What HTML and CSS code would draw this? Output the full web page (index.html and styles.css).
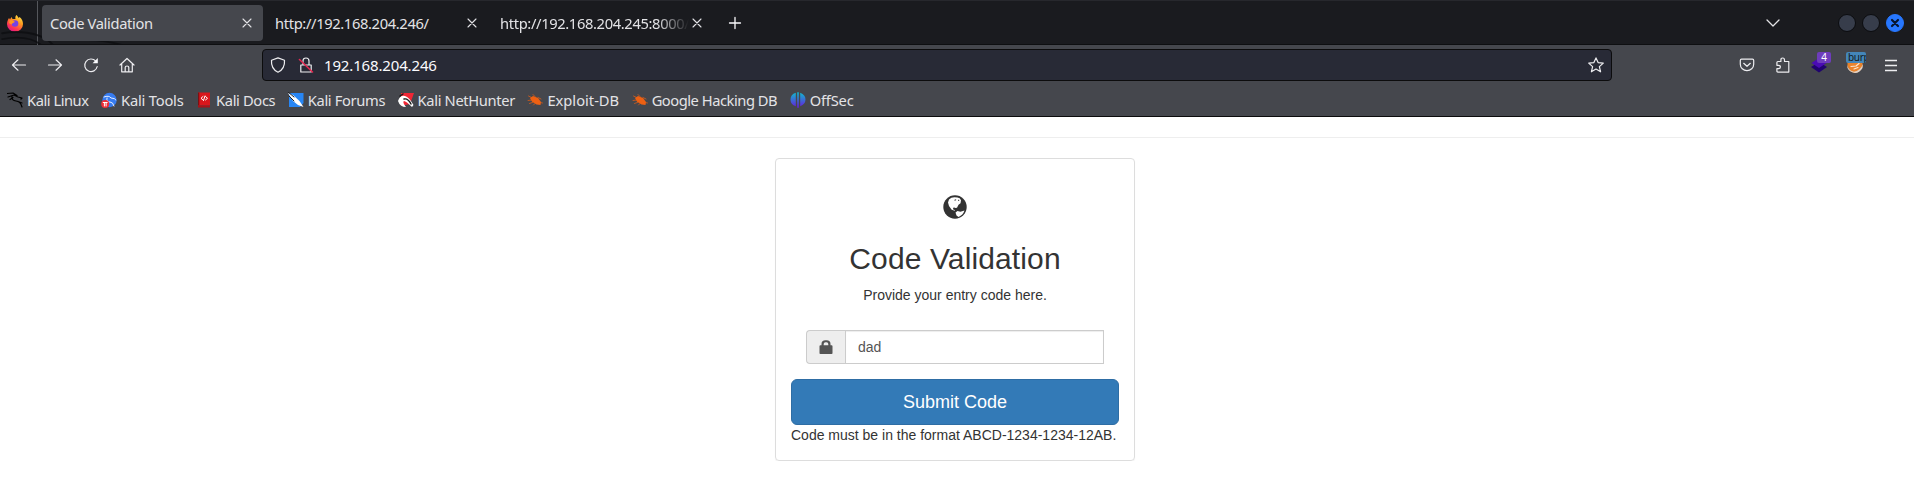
FILE: index.html
```html
<!DOCTYPE html>
<html lang="en">
<head>
<meta charset="utf-8">
<title>Code Validation</title>
<link rel="stylesheet" href="styles.css">
</head>
<body>
<header class="browser">
  <div class="tabbar">
    <svg class="wall" viewBox="0 0 200 45"><path d="M0 33C16 30 36 32 48 41l4 4M0 39c16-3 30-2 40 6M88 40c14 0 24 2 34 5" fill="none" stroke="#0d0e11" stroke-width="2"/></svg>
    <div class="fxcell">
      <svg width="18" height="18" viewBox="0 0 18 18"><defs><linearGradient id="fx" x1=".9" y1="0" x2=".3" y2="1"><stop offset="0" stop-color="#fff44f"/><stop offset=".4" stop-color="#ff9a1f"/><stop offset=".75" stop-color="#ff3b4e"/><stop offset="1" stop-color="#e31587"/></linearGradient></defs><path d="M10.500 1c1 .8 1.500 2 2.200 3l.9-.9C16 5 17 7.500 17 10a8 7.800 0 0 1-16 0C1 7.500 2 5.500 3 4l1 1.500L5.500 3l1 2L9.500 5C9 3.500 9.500 2 10.500 1z" fill="url(#fx)"/><circle cx="9" cy="9.500" r="3.300" fill="#7542e5"/><path d="M4 6c2 0 3.500.5 5 2-1.500.5-2.500 1-3.500 2.500L3 9z" fill="#ff9520"/></svg>
    </div>
    <div class="tab active"><span class="label">Code Validation</span><svg class="x" viewBox="0 0 10 10"><path d="M1 1l8 8M9 1L1 9"/></svg></div>
    <div class="tab"><span class="label">http://192.168.204.246/</span><svg class="x" viewBox="0 0 10 10"><path d="M1 1l8 8M9 1L1 9"/></svg></div>
    <div class="tab"><span class="label fade">http://192.168.204.245:8000/</span><svg class="x" viewBox="0 0 10 10"><path d="M1 1l8 8M9 1L1 9"/></svg></div>
    <svg class="plus" viewBox="0 0 14 14"><path d="M7 1.500v11M1.500 7h11"/></svg>
    <svg class="chev" viewBox="0 0 14 8"><path d="M1 1l6 6 6-6"/></svg>
    <div class="win"><i></i><i></i><i class="close"><svg viewBox="0 0 10 10"><path d="M2 2l6 6M8 2L2 8"/></svg></i></div>
  </div>
  <div class="navbar">
    <div class="navicons">
      <svg viewBox="0 0 16 16"><path d="M14.500 8H1.500M7 2.800L1.500 8 7 13.200"/></svg>
      <svg viewBox="0 0 16 16"><path d="M1.500 8h13M9 2.800L14.500 8 9 13.200"/></svg>
      <svg viewBox="0 0 16 16"><path d="M12.800 4.200A6.300 6.300 0 1 0 14.200 9.500"/><path d="M14.800 1v5.200H9.600z" fill="#fbfbfe" stroke="none"/></svg>
      <svg viewBox="0 0 16 16"><path d="M1 8l7-6.500L15 8M2.700 7v7.800h10.600V7M6.200 14.500v-4q0-1.500 1.800-1.500t1.800 1.500v4"/></svg>
    </div>
    <div class="urlbar">
      <svg class="shield" viewBox="0 0 16 16"><path d="M8 .9l6.500 2.300c.4 5-1 9.300-6.500 12-5.500-2.700-6.900-7-6.500-12z"/></svg>
      <svg class="lock" viewBox="0 0 16 16"><path d="M2.800 8h10.400v7H2.800zM5 8V4q0-3 3-3t3 3v4"/><path d="M1.500 2.500l13 12.500" stroke="#e22850" stroke-width="1.600"/></svg>
      <span class="addr">192.168.204.246</span>
      <svg class="star" viewBox="0 0 16 16"><path d="M8 .9l2.100 4.700 5.200.5-3.900 3.500 1.200 5.200L8 12.100l-4.600 2.700 1.200-5.200L.7 6.100l5.200-.5z"/></svg>
    </div>
    <div class="tools">
      <svg viewBox="0 0 16 16"><path d="M2.500 2.200h11q1.200 0 1.200 1.200v3.800a6.700 6.500 0 0 1-13.400 0V3.400q0-1.200 1.200-1.200z"/><path d="M4.700 6.300L8 9.300l3.300-3"/></svg>
      <svg viewBox="0 0 16 16"><path d="M1.900 5.500q0-1 1-1h3V3q0-2 1.800-2t1.800 2v1.500h4.300v10.600H2.900q-1 0-1-1v-2.400h1.500q2 0 2-1.700t-2-1.700H1.900z"/></svg>
      <div class="ext"><svg viewBox="0 0 16 16"><path d="M8 5l8 5-8 5.500L0 10z" fill="#20036f" stroke="none"/><path d="M8 1l7.500 5L8 11 .5 6z" fill="#4a0bb5" stroke="none"/></svg><b class="badge">4</b></div>
      <div class="ext fox"><svg viewBox="0 0 16 16"><path d="M.5 2h15v7q-1.500 6-7.500 7-6-1-7.500-7z" fill="#e9832b" stroke="none"/><path d="M0 8q2 6 7 6.800Q13 14 16 7l-.5 4q-3 5-7.500 5-6-1-7.500-5z" fill="#dfd2c8" stroke="none"/><path d="M4 9.500l5-.5 3-2.500M7 12l4-1.500" stroke="#fbe5cf"/></svg><b class="badge burp">burp</b></div>
      <svg class="menu" viewBox="0 0 16 16"><path d="M2 3.500h12M2 8.500h12M2 13.500h12"/></svg>
    </div>
  </div>
  <nav class="bookmarks">
    <a class="t5"><svg viewBox="0 0 16 16"><path d="M0 1.500l6-.5 4 2.500M1 5l6-2 4 2 4 1-1 1M5 4.500q-.5 4 4 4.500t6 6M3 7.500l3-2M11 9.500l4 1.500" fill="none" stroke="#000" stroke-width="1.200"/></svg>Kali Linux</a>
    <a class="t2"><svg viewBox="0 0 16 16"><circle cx="8.500" cy="8" r="7.200" fill="#367bf0"/><path d="M3 5q5-2 7 1 4 0 5 2M6 6q-1 4 3 4 3 0 4 4" fill="none" stroke="#e8f0ff" stroke-width="1"/><circle cx="4.200" cy="12" r="4" fill="#ed2e36"/><path d="M2.200 10.500h4M3.400 10.500v3.500M5.100 10.500v3.500" stroke="#fff"/></svg>Kali Tools</a>
    <a class="t4"><svg viewBox="0 0 16 16"><path d="M2 .5h12v13H2z" fill="#d9161c"/><path d="M2 .5h1.300v13H2z" fill="#7d1012"/><path d="M2 13.500h12v2H2z" fill="#a91218"/><path d="M7 4.500L5 6.300 7 8M9.500 4.500l2 1.800-2 1.700M9 4L7.500 8.500" fill="none" stroke="#fff"/></svg>Kali Docs</a>
    <a class="t4"><svg viewBox="0 0 16 16"><path d="M1 1h14.500v10L12 15H1z" fill="#2786f5"/><path d="M0 1l5 2 6.500 6 4 6-5.500-2L5 9z" fill="#fff"/><path d="M0 0l6 5M1 4l5 5" stroke="#222"/></svg>Kali Forums</a>
    <a class="t4"><svg viewBox="0 0 16 16"><path d="M3 1h13l-4 11-9 2z" fill="#f02635"/><path d="M0 9q2-6 7-5 4 1 8.500 9l-1.500 2q-6-6-8-6-2 1 2 6-6 0-8-6z" fill="#fff"/><path d="M2 4l3-2M6 7q4-1 7 5" fill="none" stroke="#161616" stroke-width="1.400"/></svg>Kali NetHunter</a>
    <a><svg viewBox="0 0 16 16"><path d="M3 6l3-2 5 2 3 4-.5 3-4-.5L5 9.500z" fill="#ed6013"/><path d="M1.500 4l4 2M6 2.500l2 2M1 8.500l4-.5M2.500 11.500l4-1.500M11 5.500l3 1.500M13 10.500l2.500.5M8.500 11L6.500 13" stroke="#ed6013" stroke-width=".7"/></svg>Exploit-DB</a>
    <a class="t5"><svg viewBox="0 0 16 16"><path d="M3 6l3-2 5 2 3 4-.5 3-4-.5L5 9.500z" fill="#ed6013"/><path d="M1.500 4l4 2M6 2.500l2 2M1 8.500l4-.5M2.500 11.500l4-1.500M11 5.500l3 1.500M13 10.500l2.500.5M8.500 11L6.500 13" stroke="#ed6013" stroke-width=".7"/></svg>Google Hacking DB</a>
    <a class="t2"><svg viewBox="0 0 16 16"><defs><linearGradient id="os" gradientUnits="userSpaceOnUse" x1="0" y1="1" x2="0" y2="15"><stop offset="0" stop-color="#12b5cf"/><stop offset="1" stop-color="#6420dd"/></linearGradient></defs><path d="M5.800.8v13.400Q.5 12.500.5 7.500T5.800.8zM7.200.3h1.600v15.400H7.200zM10.200.8q5.300 2.200 5.300 6.700t-5.300 6.700z" fill="url(#os)"/></svg>OffSec</a>
  </nav>
</header>
<main class="page">
  <hr class="rule">
  <section class="panel">
    <svg class="globe" viewBox="0 0 24 24"><circle cx="12" cy="12" r="11.700" fill="#333"/><path d="M6 4.500Q8 2.300 11.500 2.200l3 .3 2.200.8 1.300 2-.5 3-2 1.500-1.500 3-2 .2-1-.8-1 1 .5 1.500 1.500.3-.3.800-3-1L6 11 5 7.500z" fill="#fff"/><path d="M12.500 17.500l2-1.500 3 .8 4-1.300q-1.500 4.500-6 6.500l-2-1.500z" fill="#fff"/><path d="M11.500 5.200l1.600-.4M15 5.300h1.200" stroke="#333" fill="none"/></svg>
    <h2 class="title">Code Validation</h2>
    <p class="lead">Provide your entry code here.</p>
    <div class="group">
      <span class="addon"><svg viewBox="0 0 14 14"><path d="M.5 6.200q0-.9.900-.9H2.500V4q0-3.700 4-3.700h1q4 0 4 3.700v1.300h1.100q.9 0 .9.900v7q0 .8-.9.800H1.400q-.9 0-.9-.8zM4.700 5.300h4.600V4q0-1.700-1.800-1.700h-1Q4.700 2.300 4.700 4z" fill="#555" fill-rule="evenodd"/></svg></span>
      <input class="field" type="text" value="dad">
    </div>
    <button class="submit">Submit Code</button>
    <p class="hint">Code must be in the format ABCD-1234-1234-12AB.</p>
  </section>
</main>
</body>
</html>
```
FILE: styles.css
```css
* { box-sizing: border-box; }
body { margin: 0; background: #fff; font-family: "Liberation Sans", Arial, sans-serif; }
.browser { height: 117px; background: #45474d; border-bottom: 1px solid #0c0c0d; font: 15px "Noto Sans", sans-serif; color: #e3e3e6; }
.browser svg { flex: none; fill: none; stroke-linecap: round; stroke-linejoin: round; }
.tabbar { position: relative; display: flex; align-items: center; height: 45px; background: #1a1b1f; border-top: 1px solid #27282d; border-bottom: 1px solid #0e0f11; padding-top: 1px; }
.wall { position: absolute; left: 0; top: 0; width: 200px; height: 44px; opacity: .8; }
.fxcell { width: 38px; height: 44px; border-right: 1px solid #55575c; padding: 13px 0 0 6px; }
.tab { display: flex; align-items: center; width: 221px; height: 36px; margin-left: 4px; padding: 0 11px 0 8px; border-radius: 4px; z-index: 1; }
.tab.active { background: #45474d; }
.label { flex: 1; white-space: nowrap; overflow: hidden; font-size: 14.700px; letter-spacing: -.35px; }
.fade { margin-right: 3px; -webkit-mask-image: linear-gradient(to right, #000 83%, transparent); mask-image: linear-gradient(to right, #000 83%, transparent); }
.x { width: 10px; height: 10px; margin-bottom: 1px; stroke: #e3e3e6; stroke-width: 1.100; }
.plus { width: 14px; height: 14px; margin-left: 15px; stroke: #fbfbfe; stroke-width: 1.300; }
.chev { width: 14px; height: 8px; margin-left: auto; margin-bottom: 1px; stroke: #e3e3e6; stroke-width: 1.300; }
.win { display: flex; gap: 6px; margin: 0 10px 0 58px; }
.win i { width: 18px; height: 18px; border-radius: 50%; background: #373d4b; border: 1px solid #0b0c0f; display: grid; place-items: center; }
.win .close { background: #2777ff; border-color: #2777ff; }
.win svg { width: 10px; height: 10px; stroke: #07152e; stroke-width: 2.200; }
.navbar { display: flex; align-items: center; height: 40px; }
.navicons { display: flex; gap: 20px; width: 262px; padding-left: 11px; }
.navicons svg, .urlbar svg, .tools svg { width: 16px; height: 16px; stroke: #ededf0; stroke-width: 1.200; }
.urlbar { display: flex; align-items: center; width: 1350px; height: 32px; background: #282a36; border: 1px solid #0c0c0d; border-radius: 4px; padding: 0 7px; color: #fbfbfe; }
.lock { margin-left: 12px; }
.addr { flex: 1; margin-left: 10px; font-size: 15px; letter-spacing: -.15px; }
.tools { display: flex; align-items: center; margin-left: auto; gap: 20px; padding-right: 15px; }
.tools .menu { stroke-linecap: butt; stroke-width: 1.300; }
.ext { position: relative; width: 16px; height: 16px; }
.ext svg { display: block; }
.badge { position: absolute; left: 6px; top: -5px; width: 14px; height: 11px; border-radius: 2px; background: #6e3cbc; color: #fff; font: 10px/11px "Noto Sans", sans-serif; text-align: center; overflow: hidden; }
.badge.burp { left: -1px; width: 20px; color: #101820; background: #4486b9; text-align: left; padding-left: 2px; letter-spacing: -.3px; }
.bookmarks { display: flex; height: 30px; align-items: center; padding-left: 7px; gap: 12.500px; font-size: 14.700px; }
.bookmarks a { display: flex; align-items: center; gap: 4px; white-space: nowrap; }
.bookmarks .t2 { letter-spacing: -.2px; }
.bookmarks .t4 { letter-spacing: -.35px; }
.bookmarks .t5 { letter-spacing: -.46px; }
.bookmarks svg { width: 16px; height: 16px; }
.page { display: flex; flex-direction: column; align-items: center; color: #333; }
.rule { width: 100%; margin: 20px 0; border: 0; border-top: 1px solid #eee; }
.panel { width: 360px; height: 303px; margin-right: 4px; padding: 36px 15px 15px; border: 1px solid #ddd; border-radius: 4px; box-shadow: 0 1px 1px rgba(0,0,0,.05); display: flex; flex-direction: column; align-items: center; }
.globe { width: 24px; height: 24px; }
.title { margin: 23px 0 10px; font-size: 30px; line-height: 33px; font-weight: 400; letter-spacing: .12px; }
.lead { margin: 0 0 25px; font-size: 14px; line-height: 20px; }
.group { display: flex; width: 298px; height: 34px; }
.addon { width: 39px; display: grid; place-items: center; background: #eee; border: 1px solid #ccc; border-right: 0; border-radius: 4px 0 0 4px; }
.addon svg { width: 14px; height: 14px; }
.field { flex: 1; min-width: 0; padding: 6px 12px; border: 1px solid #ccc; border-radius: 0; box-shadow: inset 0 1px 1px rgba(0,0,0,.075); font: 14px "Liberation Sans", sans-serif; color: #555; outline: 0; }
.submit { width: 328px; height: 46px; margin: 15px 0 0; background: #337ab7; border: 1px solid #2e6da4; border-radius: 6px; color: #fff; font: 18px "Liberation Sans", sans-serif; }
.hint { align-self: flex-start; margin: 0; font-size: 14px; line-height: 20px; white-space: nowrap; }
```
